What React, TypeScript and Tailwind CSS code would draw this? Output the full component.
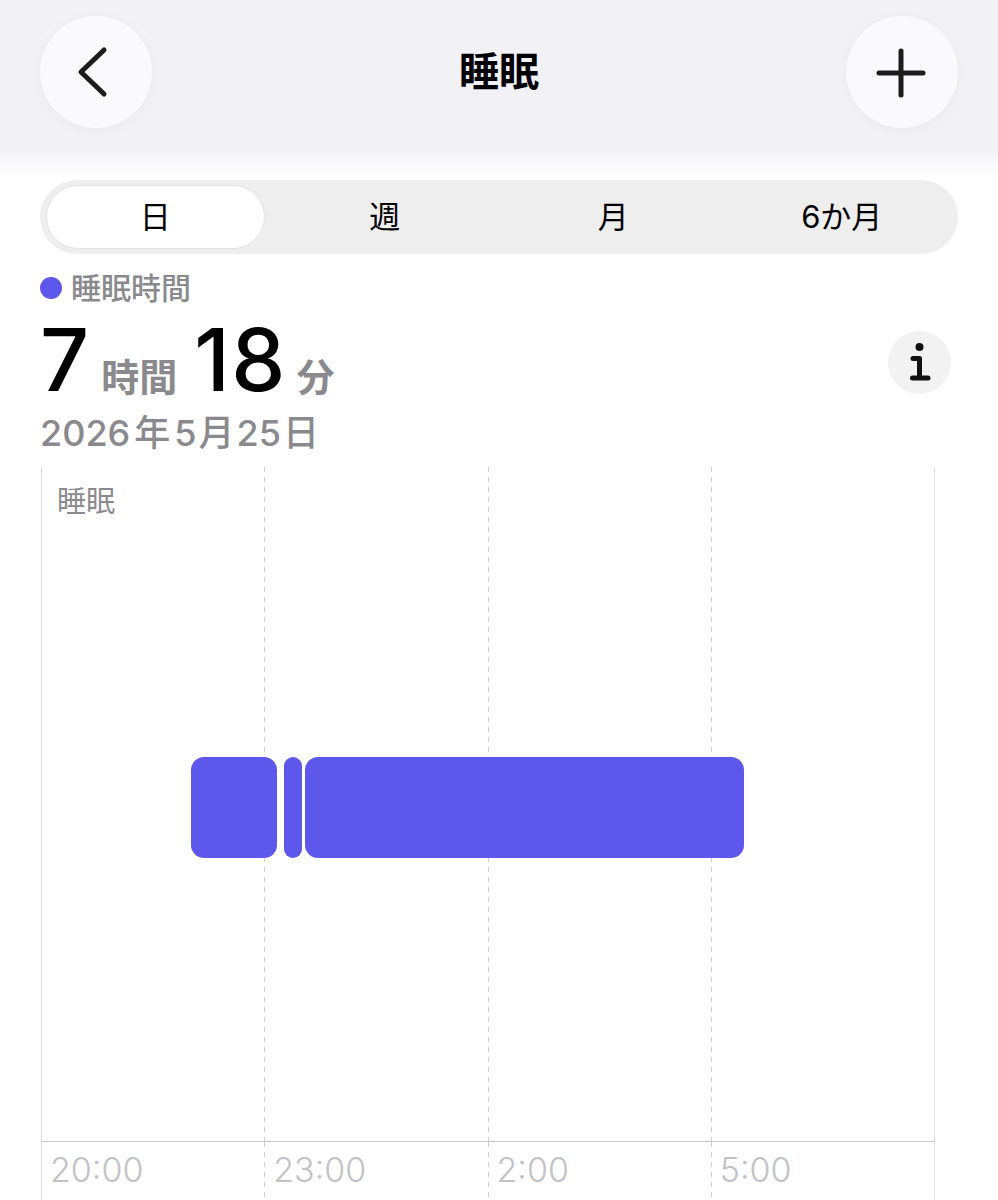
import React from "react";

const bars = [
  { start: 121, end: 190, r: "rounded-[13px]" },
  { start: 196, end: 210.5, r: "rounded-full" },
  { start: 213, end: 566, r: "rounded-[13px]" },
];

const TOTAL = 720;

function DashLine() {
  return (
    <div className="w-px self-stretch bg-[repeating-linear-gradient(to_bottom,#cfcfd3_0px,#cfcfd3_5px,transparent_5px,transparent_10px)]" />
  );
}

function TimeLabel({ t }: { t: string }) {
  return (
    <div className="flex-1 min-w-0">
      <div className="pl-[8px] pt-[11px] text-[34px] font-light text-[#c2c2c6] leading-none">{t}</div>
    </div>
  );
}

export default function App() {
  const font = "font-['Inter','Noto_Sans_CJK_JP',sans-serif]";
  return (
    <div className={`w-[998px] h-[1200px] overflow-hidden bg-white ${font}`}>
      {/* Header */}
      <div className="h-[152px] bg-[#f1f1f6] px-10 pt-4 flex justify-between items-start">
        <div className="w-[112px] h-[112px] rounded-full bg-[#fafafc] shadow-[0_2px_12px_rgba(0,0,0,0.04)] flex items-center justify-center">
          <svg width="112" height="112" viewBox="0 0 112 112" fill="none">
            <path d="M64 34 L41 56 L64 78" stroke="#1c1c1e" strokeWidth="5" strokeLinecap="round" strokeLinejoin="round" />
          </svg>
        </div>
        <div className="h-[112px] flex items-center text-[40px] font-bold text-black leading-none">睡眠</div>
        <div className="w-[112px] h-[112px] rounded-full bg-[#fafafc] shadow-[0_2px_12px_rgba(0,0,0,0.04)] flex items-center justify-center">
          <svg width="112" height="112" viewBox="0 0 112 112" fill="none">
            <path d="M33 57 H77 M55 35 V79" stroke="#1c1c1e" strokeWidth="5" strokeLinecap="round" />
          </svg>
        </div>
      </div>

      {/* Content */}
      <div className="px-10 pt-[28px] bg-[linear-gradient(to_bottom,#f5f5f8,#ffffff_26px)]">
        {/* Segmented control */}
        <div className="h-[74px] rounded-full bg-[#eeeeef] px-[2px] py-[5px] grid grid-cols-4">
          <div className="ml-[4px] mr-[6px] rounded-full bg-white border border-[#e4e4e6] flex items-center justify-center text-[31px] text-black">日</div>
          <div className="flex items-center justify-center text-[31px] text-black">週</div>
          <div className="flex items-center justify-center text-[31px] text-black">月</div>
          <div className="flex items-center justify-center text-[31px] text-black">6か月</div>
        </div>

        {/* Legend */}
        <div className="mt-[19px] h-[30px] flex items-center gap-[9px]">
          <div className="w-[22px] h-[22px] rounded-full bg-[#5e57ec]" />
          <div className="text-[30px] font-medium text-[#8a8a8e] leading-none">睡眠時間</div>
        </div>

        {/* Big value */}
        <div className="mt-[14px] flex items-center justify-between">
          <div className="flex items-baseline leading-none">
            <span className="text-[86px] font-medium text-black leading-none">7</span>
            <span className="ml-[12px] text-[38px] font-semibold text-[#8a8a8e] leading-none">時間</span>
            <span className="ml-[17px] text-[86px] font-medium tracking-[0.015em] text-black leading-none">18</span>
            <span className="ml-[10px] text-[38px] font-semibold text-[#8a8a8e] leading-none">分</span>
          </div>
          <div className="mr-[7px] mt-[4px] w-[63px] h-[63px] rounded-full bg-[#f2f2f3] flex items-center justify-center">
            <svg width="63" height="63" viewBox="0 0 63 63" fill="none">
              <circle cx="31.5" cy="16" r="4" fill="#111" />
              <path d="M25 27.5 H31.5 V47 M24.5 47 H40" stroke="#111" strokeWidth="5" strokeLinecap="round" strokeLinejoin="round" />
            </svg>
          </div>
        </div>

        {/* Date */}
        <div className="mt-[12px] flex items-baseline text-[36px] font-medium text-[#8a8a8e] leading-none">
          <span>2026</span>
          <span className="ml-[4px]">年</span>
          <span className="ml-[4px]">5</span>
          <span className="ml-[2px]">月</span>
          <span className="ml-[2px]">25</span>
          <span className="ml-[2px]">日</span>
        </div>

        {/* Chart */}
        <div className="mt-[16px] ml-px w-[894px] h-[733px] flex flex-col">
          <div className="relative flex-1 flex">
            <div className="w-px self-stretch bg-[#dadadd]" />
            <div className="flex-1 min-w-0">
              <div className="pl-[15px] pt-[20px] text-[29px] text-[#8a8a8e] leading-none">睡眠</div>
            </div>
            <DashLine />
            <div className="flex-1 min-w-0" />
            <DashLine />
            <div className="flex-1 min-w-0" />
            <DashLine />
            <div className="flex-1 min-w-0" />
            <div className="w-px self-stretch bg-[#e2e2e5]" />
            {bars.map((b, i) => (
              <div
                key={i}
                className={`absolute top-[290px] h-[101px] bg-[#5e57ec] ${b.r}`}
                style={{
                  left: `${(b.start / TOTAL) * 100}%`,
                  width: `${((b.end - b.start) / TOTAL) * 100}%`,
                }}
              />
            ))}
          </div>
          <div className="h-px bg-[#c7c7cc]" />
          <div className="h-[58px] flex">
            <div className="w-px self-stretch bg-[#dadadd]" />
            <TimeLabel t="20:00" />
            <DashLine />
            <TimeLabel t="23:00" />
            <DashLine />
            <TimeLabel t="2:00" />
            <DashLine />
            <TimeLabel t="5:00" />
            <div className="w-px self-stretch bg-[#e2e2e5]" />
          </div>
        </div>
      </div>
    </div>
  );
}
